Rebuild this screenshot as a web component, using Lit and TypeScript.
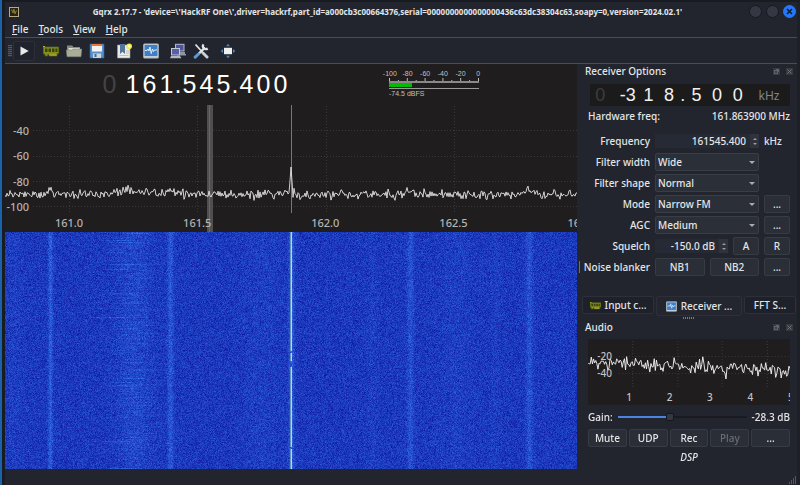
import { LitElement, html, css, svg } from "lit";
import { customElement, query, state } from "lit/decorators.js";
import { classMap } from "lit/directives/class-map.js";

const random = (seed: number) => () => {
  seed = (seed + 0x6d2b79f5) | 0;
  let t = Math.imul(seed ^ (seed >>> 15), 1 | seed);
  t = (t + Math.imul(t ^ (t >>> 7), 61 | t)) ^ t;
  return ((t ^ (t >>> 14)) >>> 0) / 4294967296;
};

const bump = (x: number, centre: number, width: number) =>
  Math.exp(-((x - centre) ** 2) / (2 * width * width));

/** Received power trace of the panadapter, 572 bins wide. */
const spectrumPath = (): string => {
  const next = random(11);
  const points: string[] = [];
  for (let x = 0; x <= 572; x++) {
    let y = 89.5 + (next() + next() + next() - 1.5) * 4.5;
    y -= 7 * bump(x, 45, 1.5) + 3 * bump(x, 126, 13) + 5 * bump(x, 165, 3);
    y -= 5 * bump(x, 405, 3) + 4 * bump(x, 524, 4) + 4 * bump(x, 283, 3);
    if (x === 286) y = 62;
    if (x === 285 || x === 287) y = 76;
    points.push(`${x} ${y.toFixed(1)}`);
  }
  return "M" + points.join("L");
};

/** Audio trace, sloping down towards the high frequencies. */
const audioPath = (): string => {
  const next = random(5);
  const points: string[] = [];
  for (let x = 0; x <= 202; x++) {
    const dip = next() > 0.93 ? 6 : 0;
    const y = 23 + (x / 202) * 9 + (next() + next() + next() - 1.5) * 7 + dip;
    points.push(`${x} ${y.toFixed(1)}`);
  }
  return "M" + points.join("L");
};

const icons = {
  play: svg`<path d="M4 2.800v10.400L13.400 8z" fill="#e6e8ea"/>`,
  card: svg`<path d="M0 3h2v1.500H0z" fill="#c9d24a"/><path d="M.3 4h15.400v6.500H14V13H6v-1.500H4.500V13H2v-2H.3z" fill="#83901a" stroke="#5d680d" stroke-width=".7"/><path d="M2 5.500h2.500v3.500H2zM5.500 5.500H8v3.500H5.500zM9 5.500h2.500v3.500H9zM12.400 5.500h2v3.500h-2z" fill="#3b4210"/><path d="M6.500 11.300h7v1.200h-7z" fill="#b5a93c"/>`,
  folder: svg`<path d="M1 2.500h5L7.500 4H14v9H1z" fill="#868c7a"/><path d="M2.500 5h11v2h-11z" fill="#dfe0d4"/><path d="M.2 7h5.600L7 6h8.900L15 13.800H1z" fill="#a9ad98" stroke="#777d6e" stroke-width=".5"/>`,
  floppy: svg`<path d="M1 1h14v14H1z" fill="#5b92cd" stroke="#2d5c96" stroke-width=".7"/><path d="M3 1h10v7.500H3z" fill="#f3f3f1"/><path d="M3 1h10v2H3z" fill="#e6783c"/><path d="M4 10.500h8V15H4z" fill="#cfd5da"/><path d="M5.500 11h2v3h-2z" fill="#49698b"/>`,
  bookmark: svg`<path d="M1.500 2h12.500v13H1.500z" fill="#e9e9e5" stroke="#9a9a98" stroke-width=".6"/><path d="M4 1h5v10L6.500 8.800 4 11z" fill="#54749c"/><path d="M10 8h3M10 10h3M3.500 12.500h9" stroke="#b5b5b2" stroke-width=".8"/><circle cx="13.200" cy="3.300" r="2.800" fill="#f3ea45"/><circle cx="13.200" cy="3.300" r="1.200" fill="#fffccb"/>`,
  dsp: svg`<rect x=".2" y=".7" width="15.600" height="14.600" rx="1.500" fill="#c3cdd3" stroke="#8c959c" stroke-width=".6"/><rect x="1.600" y="2" width="12.800" height="11" fill="#3f7fca"/><path d="M2 7.500h2l1-1.500 1 2 1-4 1.200 6.500L9.500 6l1 2.500 1-1.500H14" fill="none" stroke="#e8f7ff" stroke-width=".9"/>`,
  network: svg`<path d="M5 .8h9.500v7.700H5z" fill="#b6b8c4"/><path d="M6 1.800h7.500v5.700H6z" fill="#4b54a0"/><path d="M8 9h7v2H8zM7 11h9v1.500H7z" fill="#92959c"/><path d="M1 5h9v7.500H1z" fill="#c6c8ce"/><path d="M2 6h7v5.500H2z" fill="#5660a8"/><path d="M1 13h9l1.500 2.200H0z" fill="#b4b7bd"/>`,
  tools: svg`<path d="M2.500 1.500 12 12" stroke="#dfe3e4" stroke-width="1.800"/><path d="m10 10 4 4" stroke="#c6d0d6" stroke-width="3" stroke-linecap="round"/><path d="M12 4.500 5 11.500" stroke="#e2e5e7" stroke-width="2.400"/><path d="M10.500 1.300a3 3 0 0 0 4.200 4.200" fill="none" stroke="#e2e5e7" stroke-width="2.200"/><path d="m5.500 11-3.300 3.200" stroke="#5b9ad8" stroke-width="3" stroke-linecap="round"/>`,
  fullscreen: svg`<rect x="4" y="4.800" width="8" height="6.400" fill="#eef0f0"/><path d="M8 .8 10 3.200H6zM8 15.200 10 12.800H6zM.6 8 3 6v4zM15.400 8 13 6v4z" fill="#4781bd"/>`,
};

const icon = (name: keyof typeof icons) =>
  html`<svg class="icon" viewBox="0 0 16 16" aria-hidden="true">${icons[name]}</svg>`;

const shared = css`
  :host { display: block; min-width: 0; }
  * { box-sizing: border-box; }
  button, input, select { font: inherit; color: inherit; margin: 0; padding: 0; border: 0; background: none; border-radius: 0; min-width: 0; }
  .icon { display: block; width: 16px; height: 16px; }
`;

@customElement("spectrum-view")
class SpectrumView extends LitElement {
  @query("canvas") private canvas!: HTMLCanvasElement;

  static styles = [shared, css`
    :host { display: flex; flex-direction: column; background: #1f1d1e; overflow: hidden; }
    .readout { display: flex; height: 41px; padding: 6px 0 0 96px; }
    .digits { display: flex; font: 25px/28px "Liberation Sans", sans-serif; color: #fff; width: 290px; }
    .digit { width: 17px; text-align: center; }
    .dot { width: 6px; display: flex; justify-content: center; }
    .dim { color: #454344; }
    .meter { display: flex; flex-direction: column; align-items: center; width: 106px; margin-left: -10px; font: 7px/8px "Liberation Sans", sans-serif; color: #c0c0c0; }
    .scale { display: flex; width: 100%; }
    .scale span { flex: 1; display: flex; justify-content: center; }
    .bar { width: 90px; height: 11px; display: block; }
    .level { width: 90px; padding-top: 1px; }
    .plot { display: grid; grid-template: 127px / 1fr; color: #b4b3b3; font-size: 11px; }
    .plot > * { grid-area: 1 / 1; min-width: 0; }
    .trace { width: 100%; height: 127px; display: block; }
    .grid { stroke: #3a3839; stroke-dasharray: 1 2; }
    .power { display: grid; grid-template-rows: repeat(4, 1fr); align-items: center; height: 115px; padding-top: 13px; width: 24px; justify-items: end; line-height: 16px; }
    .freqs { display: flex; align-self: end; overflow: hidden; line-height: 18px; }
    .freqs span { flex: 0 0 22.4%; text-align: center; }
    .fall { flex: 1; contain: size; min-height: 0; height: 0; width: 100%; display: block; background: #1a3ac0; }
  `];

  private drawWaterfall() {
    const width = this.canvas.clientWidth;
    const height = this.canvas.clientHeight;
    if (!width || !height) return;
    this.canvas.width = width;
    this.canvas.height = height;
    const context = this.canvas.getContext("2d")!;
    const image = context.createImageData(width, height);
    const next = random(42);
    const carrier = Math.round((286 * width) / 572);
    for (let y = 0; y < height; y++) {
      const shift = (next() - 0.5) * 30;
      const strength = 0.02 + next() * next() * 0.32;
      const spread = 6 + next() * 9;
      const gap = (y > 118 && y < 121) || (y > 128 && y < 135) || (y > 214 && y < 217);
      const glow = next();
      for (let px = 0; px < width; px++) {
        const x = (px * 572) / width;
        let v = 0.35 + (next() + next() + next() - 1.5) * 0.27;
        v += strength * bump(x, 126 + shift, spread) + 0.1 * bump(x, 130, 10);
        v += 0.36 * bump(x, 45, 1.6) + 0.32 * bump(x, 165, 2);
        v += 0.26 * bump(x, 405, 2.4) + 0.26 * bump(x, 524, 2.4);
        v += 0.06 * (bump(x, 490, 3) + bump(x, 450, 12) + bump(x, 367, 4) + bump(x, 8, 6) + bump(x, 255, 12));
        v += 0.35 * bump(x, 286, 2);
        v = Math.max(0, Math.min(1, v));
        const at = (y * width + px) * 4;
        const line = px === carrier && !gap;
        image.data[at] = line ? 205 + glow * 35 : 12 + v * 44;
        image.data[at + 1] = line ? 215 + glow * 15 : 22 + v * 98;
        image.data[at + 2] = line ? 100 - glow * 50 : 158 + v * 84;
        image.data[at + 3] = 255;
        if (px === carrier - 1 && !gap) {
          image.data[at] = 100;
          image.data[at + 1] = 150;
          image.data[at + 2] = 190;
        }
      }
    }
    context.putImageData(image, 0, 0);
  }

  firstUpdated() {
    this.drawWaterfall();
    new ResizeObserver(() => this.drawWaterfall()).observe(this.canvas);
  }

  render() {
    return html`
      <div class="readout">
        <div class="digits">
          ${[..."0 161.545.400"].map((c, i) => html`<span class=${classMap({ digit: /\d/.test(c), dot: !/\d/.test(c), dim: i === 0 })}>${c}</span>`)}
        </div>
        <div class="meter">
          <div class="scale">${[-100, -80, -60, -40, -20, 0].map((n) => html`<span>${n}</span>`)}</div>
          <svg class="bar" viewBox="0 0 90 11">
            <path d=${Array.from({ length: 11 }, (_, i) => `M${Math.min(0.5 + i * 8.9, 89.5)} ${i % 2 ? 2 : 0}V4`).join("")} stroke="#bdbdbd"/>
            <path d="M0 4h90" stroke="#8a8888" stroke-width="2"/>
            <path d="M0 10.500h90" stroke="#9c9b9b"/>
            <path d="M0 5h23v4H0z" fill="#00bb00"/>
          </svg>
          <div class="level">-74.5 dBFS</div>
        </div>
      </div>
      <div class="plot">
        <svg class="trace" viewBox="0 0 572 127" preserveAspectRatio="none">
          <path class="grid" d="M28 25.500H572M28 51.500H572M28 76.500H572M28 101.500H572M64.500 1V108M192.500 1V108M321.500 1V108M449.500 1V108"/>
          <path d="M202 0h6v127h-6z" fill="#504e4f"/>
          <path d="M204.500 0V127" stroke="#a3504c"/>
          <path d="M286.500 0V108" stroke="#77787b"/>
          <path d=${spectrumPath()} fill="none" stroke="#e4e4e4" stroke-width=".9"/>
        </svg>
        <div class="power">${[-40, -60, -80, -100].map((n) => html`<span>${n}</span>`)}</div>
        <div class="freqs">${["161.0", "161.5", "162.0", "162.5", "163.0"].map((n) => html`<span>${n}</span>`)}</div>
      </div>
      <canvas class="fall"></canvas>`;
  }
}

@customElement("dock-title")
class DockTitle extends LitElement {
  static properties = { name: {} };
  declare name: string;
  static styles = [shared, css`
    .bar { display: flex; align-items: center; height: 14px; padding: 0 7px; gap: 6px; }
    h2 { flex: 1; margin: 0; font-size: 10px; font-weight: 500; }
    button { width: 7px; height: 7px; background: #383a41; color: #70737a; }
    svg { display: block; width: 7px; height: 7px; }
  `];
  render() {
    return html`<div class="bar"><h2>${this.name}</h2>
      <button aria-label="Float"><svg viewBox="0 0 7 7"><path d="M1.500 2.500h3v3h-3zM3 1.500h2.500V4" fill="none" stroke="currentColor" stroke-width=".8"/></svg></button>
      <button aria-label="Close"><svg viewBox="0 0 7 7"><path d="m1.500 1.500 4 4m0-4-4 4" stroke="currentColor"/></svg></button></div>`;
  }
}

@customElement("receiver-dock")
class ReceiverDock extends LitElement {
  static styles = [shared, css`
    .offset { display: flex; height: 22px; margin: 6px 10px 0 12px; background: #1c1b1c; align-items: center; font: 18px/22px "Liberation Sans", sans-serif; color: #f2f2f2; }
    .digit { flex: 3 1 0; display: flex; justify-content: center; }
    .dot { flex: 1 1 0; display: flex; justify-content: center; }
    .dim { color: #3e3d3e; }
    .unit { width: 42px; text-align: center; font: 12px "Noto Sans", sans-serif; color: #858485; }
    .hardware { display: flex; justify-content: space-between; margin: 2px 10px 8px; line-height: 16px; }
    .form { display: grid; grid-template-columns: 62px 1fr 26px; gap: 3px 5px; grid-auto-rows: 18px; margin: 0 10px; align-items: center; }
    .form > label, .form > .label { text-align: right; white-space: nowrap; justify-self: end; }
    .form > .wide { grid-column: 2; display: flex; gap: 5px; height: 18px; }
    .spin { display: flex; flex: 1; height: 14px; align-self: center; background: #262a34; min-width: 0; }
    .spin input { flex: 1; width: 0; text-align: right; padding-right: 4px; }
    .arrows { width: 9px; background: #30333c; display: grid; place-content: center; gap: 3px; }
    .up, .down { border: 2px solid transparent; width: 4px; height: 2px; }
    .up { border-top: 0; border-bottom-color: #9a9ca1; }
    .down { border-bottom: 0; border-top-color: #9a9ca1; }
    .combo { flex: 1; display: grid; }
    .combo > * { grid-area: 1 / 1; }
    select { appearance: none; height: 18px; padding: 0 14px 0 2px; background: #2b2f38; border: 1px solid #393d46; border-radius: 2px; line-height: 16px; }
    .caret { align-self: center; justify-self: end; margin-right: 4px; border: 3px solid transparent; border-top-color: #a9abb0; border-bottom: 0; pointer-events: none; }
    .push { height: 18px; flex: 1; background: #2a2e37; border: 1px solid #373b43; border-radius: 2px; text-align: center; line-height: 15px; }
    .more { width: 26px; }
    .narrow { flex: 0 0 26px; }
  `];

  private combo(id: string, label: string, value: string, more = false) {
    return html`<label for=${id}>${label}</label>
      <div class="wide"><span class="combo"><select id=${id}><option>${value}</option></select><i class="caret"></i></span></div>
      ${more ? html`<button class="push more" aria-label="${label} options">...</button>` : html`<span></span>`}`;
  }

  render() {
    const arrows = html`<span class="arrows"><i class="up"></i><i class="down"></i></span>`;
    return html`
      <dock-title .name=${"Receiver Options"}></dock-title>
      <div class="offset">
        ${["0", " ", "-3", "1", "8", ".", "5", "0", "0"].map((c, i) => html`<span class=${classMap({ digit: /\d/.test(c), dot: !/\d/.test(c), dim: i === 0 })}>${c}</span>`)}
        <span class="unit">kHz</span>
      </div>
      <div class="hardware"><span>Hardware freq:</span><span>161.863900 MHz</span></div>
      <div class="form">
        <label for="frequency">Frequency</label>
        <span class="spin"><input id="frequency" value="161545.400">${arrows}</span><span>kHz</span>
        ${this.combo("width", "Filter width", "Wide")}
        ${this.combo("shape", "Filter shape", "Normal")}
        ${this.combo("mode", "Mode", "Narrow FM", true)}
        ${this.combo("agc", "AGC", "Medium", true)}
        <label for="squelch">Squelch</label>
        <div class="wide"><span class="spin"><input id="squelch" value="-150.0 dB">${arrows}</span><button class="push narrow">A</button></div>
        <button class="push more">R</button>
        <span class="label">Noise blanker</span>
        <div class="wide"><button class="push">NB1</button><button class="push">NB2</button></div>
        <button class="push more" aria-label="Noise blanker options">...</button>
      </div>`;
  }
}

@customElement("audio-dock")
class AudioDock extends LitElement {
  static styles = [shared, css`
    .plot { display: grid; grid-template: 66px / 1fr; margin: 5px 10px 0 10px; background: #1f1d1e; color: #c4c3c3; overflow: hidden; }
    .plot > * { grid-area: 1 / 1; min-width: 0; }
    .trace { width: 100%; height: 66px; display: block; }
    .grid { stroke: #3a3839; stroke-dasharray: 1 2; }
    .level { width: 24px; display: grid; grid-auto-rows: 17px; align-content: start; justify-items: end; padding-top: 9px; line-height: 17px; }
    .ticks { display: flex; align-self: end; margin-left: 21px; line-height: 16px; width: 202px; }
    .ticks span { flex: 0 0 20%; text-align: center; }
    .gain { display: flex; align-items: center; gap: 5px; margin: 4px 10px; height: 16px; }
    .gain input { flex: 1; appearance: none; height: 9px; background: linear-gradient(90deg, #4a83e0 40%, #191b21 40%) center / 100% 2px no-repeat; }
    .gain input::-webkit-slider-thumb { appearance: none; width: 8px; height: 8px; background: #343841; border: 1px solid #15171c; border-radius: 2px; }
    .actions { display: grid; grid-template-columns: repeat(5, 1fr); gap: 2px; margin: 0 10px; }
    .actions button { height: 18px; background: #2a2e37; border: 1px solid #373b43; border-radius: 2px; line-height: 15px; }
    .actions button:disabled { color: #6a6d74; }
    .dsp { text-align: center; font-style: italic; margin: 2px 0 0; line-height: 16px; }
  `];
  render() {
    return html`
      <dock-title .name=${"Audio"}></dock-title>
      <div class="plot">
        <svg class="trace" viewBox="0 0 202 66" preserveAspectRatio="none">
          <path class="grid" d="M28 17.500H202M28 34.500H202M40.500 2V48M81.500 2V48M121.500 2V48M162.500 2V48"/>
          <path d=${audioPath()} fill="none" stroke="#eee" stroke-width=".9"/>
        </svg>
        <div class="level"><span>-20</span><span>-40</span></div>
        <div class="ticks">${[1, 2, 3, 4, 5].map((n) => html`<span>${n}</span>`)}</div>
      </div>
      <div class="gain"><label for="gain">Gain:</label><input id="gain" type="range" min="0" max="100" value="40"><span>-28.3 dB</span></div>
      <div class="actions"><button>Mute</button><button>UDP</button><button>Rec</button><button disabled>Play</button><button aria-label="Audio options">...</button></div>
      <p class="dsp">DSP</p>`;
  }
}

@customElement("app-root")
class AppRoot extends LitElement {
  @state() private tab = 1;

  static styles = [shared, css`
    :host { display: flex; flex-direction: column; box-sizing: border-box; min-height: 100vh; background: #22252e; color: #e4e5e7; font: 500 10px "Noto Sans", sans-serif; border-left: 2px solid #1b62a8; box-shadow: inset 0 2px #181b21, inset 3px 0 #191c23, inset -3px 0 #1d2027; }
    .title { display: grid; grid-template-columns: 42px 1fr 72px; align-items: center; height: 21px; padding: 2px 4px 0 7px; }
    .title h1 { margin: 0; font-size: 8px; font-weight: 700; text-align: center; white-space: nowrap; overflow: hidden; }
    .logo { width: 10px; height: 10px; display: block; }
    .window { display: flex; justify-content: flex-end; gap: 4px; }
    .window button { width: 13px; height: 13px; border-radius: 50%; background: #343843; border: 1px solid #171920; }
    .window .close { background: #2777f2; border-color: #2777f2; }
    .window svg { display: block; width: 11px; height: 11px; }
    .menu { display: flex; gap: 10px; padding: 0 10px; height: 16px; line-height: 16px; margin: 0 3px 0 0; }
    u { text-underline-offset: 1px; }
    .tools { display: flex; align-items: center; gap: 5px; height: 27px; margin: 0 3px; padding-left: 3px; border: solid #4a4d54; border-width: 1px 0; }
    .handle { width: 4px; height: 12px; background: repeating-linear-gradient(#55585f 0 1px, #2b2e36 1px 2px); margin-right: -4px; }
    .group { display: flex; gap: 1px; }
    .tool { width: 22px; height: 20px; display: grid; place-items: center; }
    .run { border: 1px solid #2d3038; border-radius: 2px; background: #20232b; }
    .run .icon { width: 14px; height: 14px; }
    .body { display: flex; flex: 1; margin-left: 3px; }
    spectrum-view { flex: 1; }
    .side { width: 222px; }
    .tabs { display: flex; gap: 2px; margin: 20px 4px 0; height: 20px; }
    .tabs button { display: flex; align-items: center; justify-content: center; gap: 4px; height: 18px; background: #1e2129; border: 1px solid #2d3038; border-radius: 2px; white-space: nowrap; flex: 0 0 72px; }
    .tabs button.on { flex-basis: 86px; height: 20px; background: #23262f; }
    .tabs button:last-child { flex: 1; }
    .tabs .icon { width: 11px; height: 11px; }
    .splitter { height: 4px; display: grid; place-items: center; }
    .splitter i { width: 12px; height: 2px; background: repeating-linear-gradient(90deg, #777a80 0 1px, transparent 1px 2px); }
    .status { display: flex; justify-content: flex-end; align-items: flex-end; height: 16px; padding: 0 3px; }
    .status svg { width: 9px; height: 9px; display: block; }
    .edge { width: 5px; display: flex; flex-direction: column; justify-content: center; align-items: center; margin-right: -4px; }
    .edge i { width: 1px; height: 12px; background: #6a6d73; }
  `];

  render() {
    const tabs = [["card", "Input c..."], ["dsp", "Receiver ..."], ["", "FFT S..."]] as const;
    return html`
      <header class="title">
        <svg class="logo" viewBox="0 0 10 10"><rect width="10" height="10" fill="#b8a985"/><rect x="1" y="1" width="8" height="8" fill="#292415"/><path d="M2 3h1l1 3 1-4 1 5 1-3h1" fill="none" stroke="#8a782c"/></svg>
        <h1>Gqrx 2.17.7 - 'device=\\'HackRF One\\',driver=hackrf,part_id=a000cb3c00664376,serial=0000000000000000436c63dc38304c63,soapy=0,version=2024.02.1'</h1>
        <div class="window"><button aria-label="Minimize"></button><button aria-label="Maximize"></button><button class="close" aria-label="Close"><svg viewBox="0 0 11 11"><path d="m3 3 5 5m0-5-5 5" stroke="#0b1b3a" stroke-width="1.600"/></svg></button></div>
      </header>
      <nav class="menu"><button><u>F</u>ile</button><button><u>T</u>ools</button><button><u>V</u>iew</button><button><u>H</u>elp</button></nav>
      <div class="tools">
        <i class="handle"></i>
        <button class="tool run" aria-label="Start DSP">${icon("play")}</button>
        <div class="group"><button class="tool" aria-label="Devices">${icon("card")}</button><button class="tool" aria-label="Load settings">${icon("folder")}</button><button class="tool" aria-label="Save settings">${icon("floppy")}</button></div>
        <button class="tool" aria-label="Bookmarks">${icon("bookmark")}</button>
        <button class="tool" aria-label="DSP">${icon("dsp")}</button>
        <div class="group"><button class="tool" aria-label="Remote control">${icon("network")}</button><button class="tool" aria-label="Remote settings">${icon("tools")}</button></div>
        <button class="tool" aria-label="Full screen">${icon("fullscreen")}</button>
      </div>
      <main class="body">
        <spectrum-view></spectrum-view>
        <div class="edge"><i></i></div>
        <aside class="side">
          <receiver-dock></receiver-dock>
          <div class="tabs" role="tablist">${tabs.map(([name, label], i) => html`<button role="tab" aria-selected=${this.tab === i ? "true" : "false"} class=${classMap({ on: this.tab === i })} @click=${() => (this.tab = i)}>${name ? icon(name) : ""}${label}</button>`)}</div>
          <div class="splitter"><i></i></div>
          <audio-dock></audio-dock>
        </aside>
      </main>
      <footer class="status"><svg viewBox="0 0 9 9"><path d="M7 1h1M5 3h1M7 3h1M3 5h1M5 5h1M7 5h1M1 7h1M3 7h1M5 7h1M7 7h1" stroke="#85888e"/></svg></footer>`;
  }
}
